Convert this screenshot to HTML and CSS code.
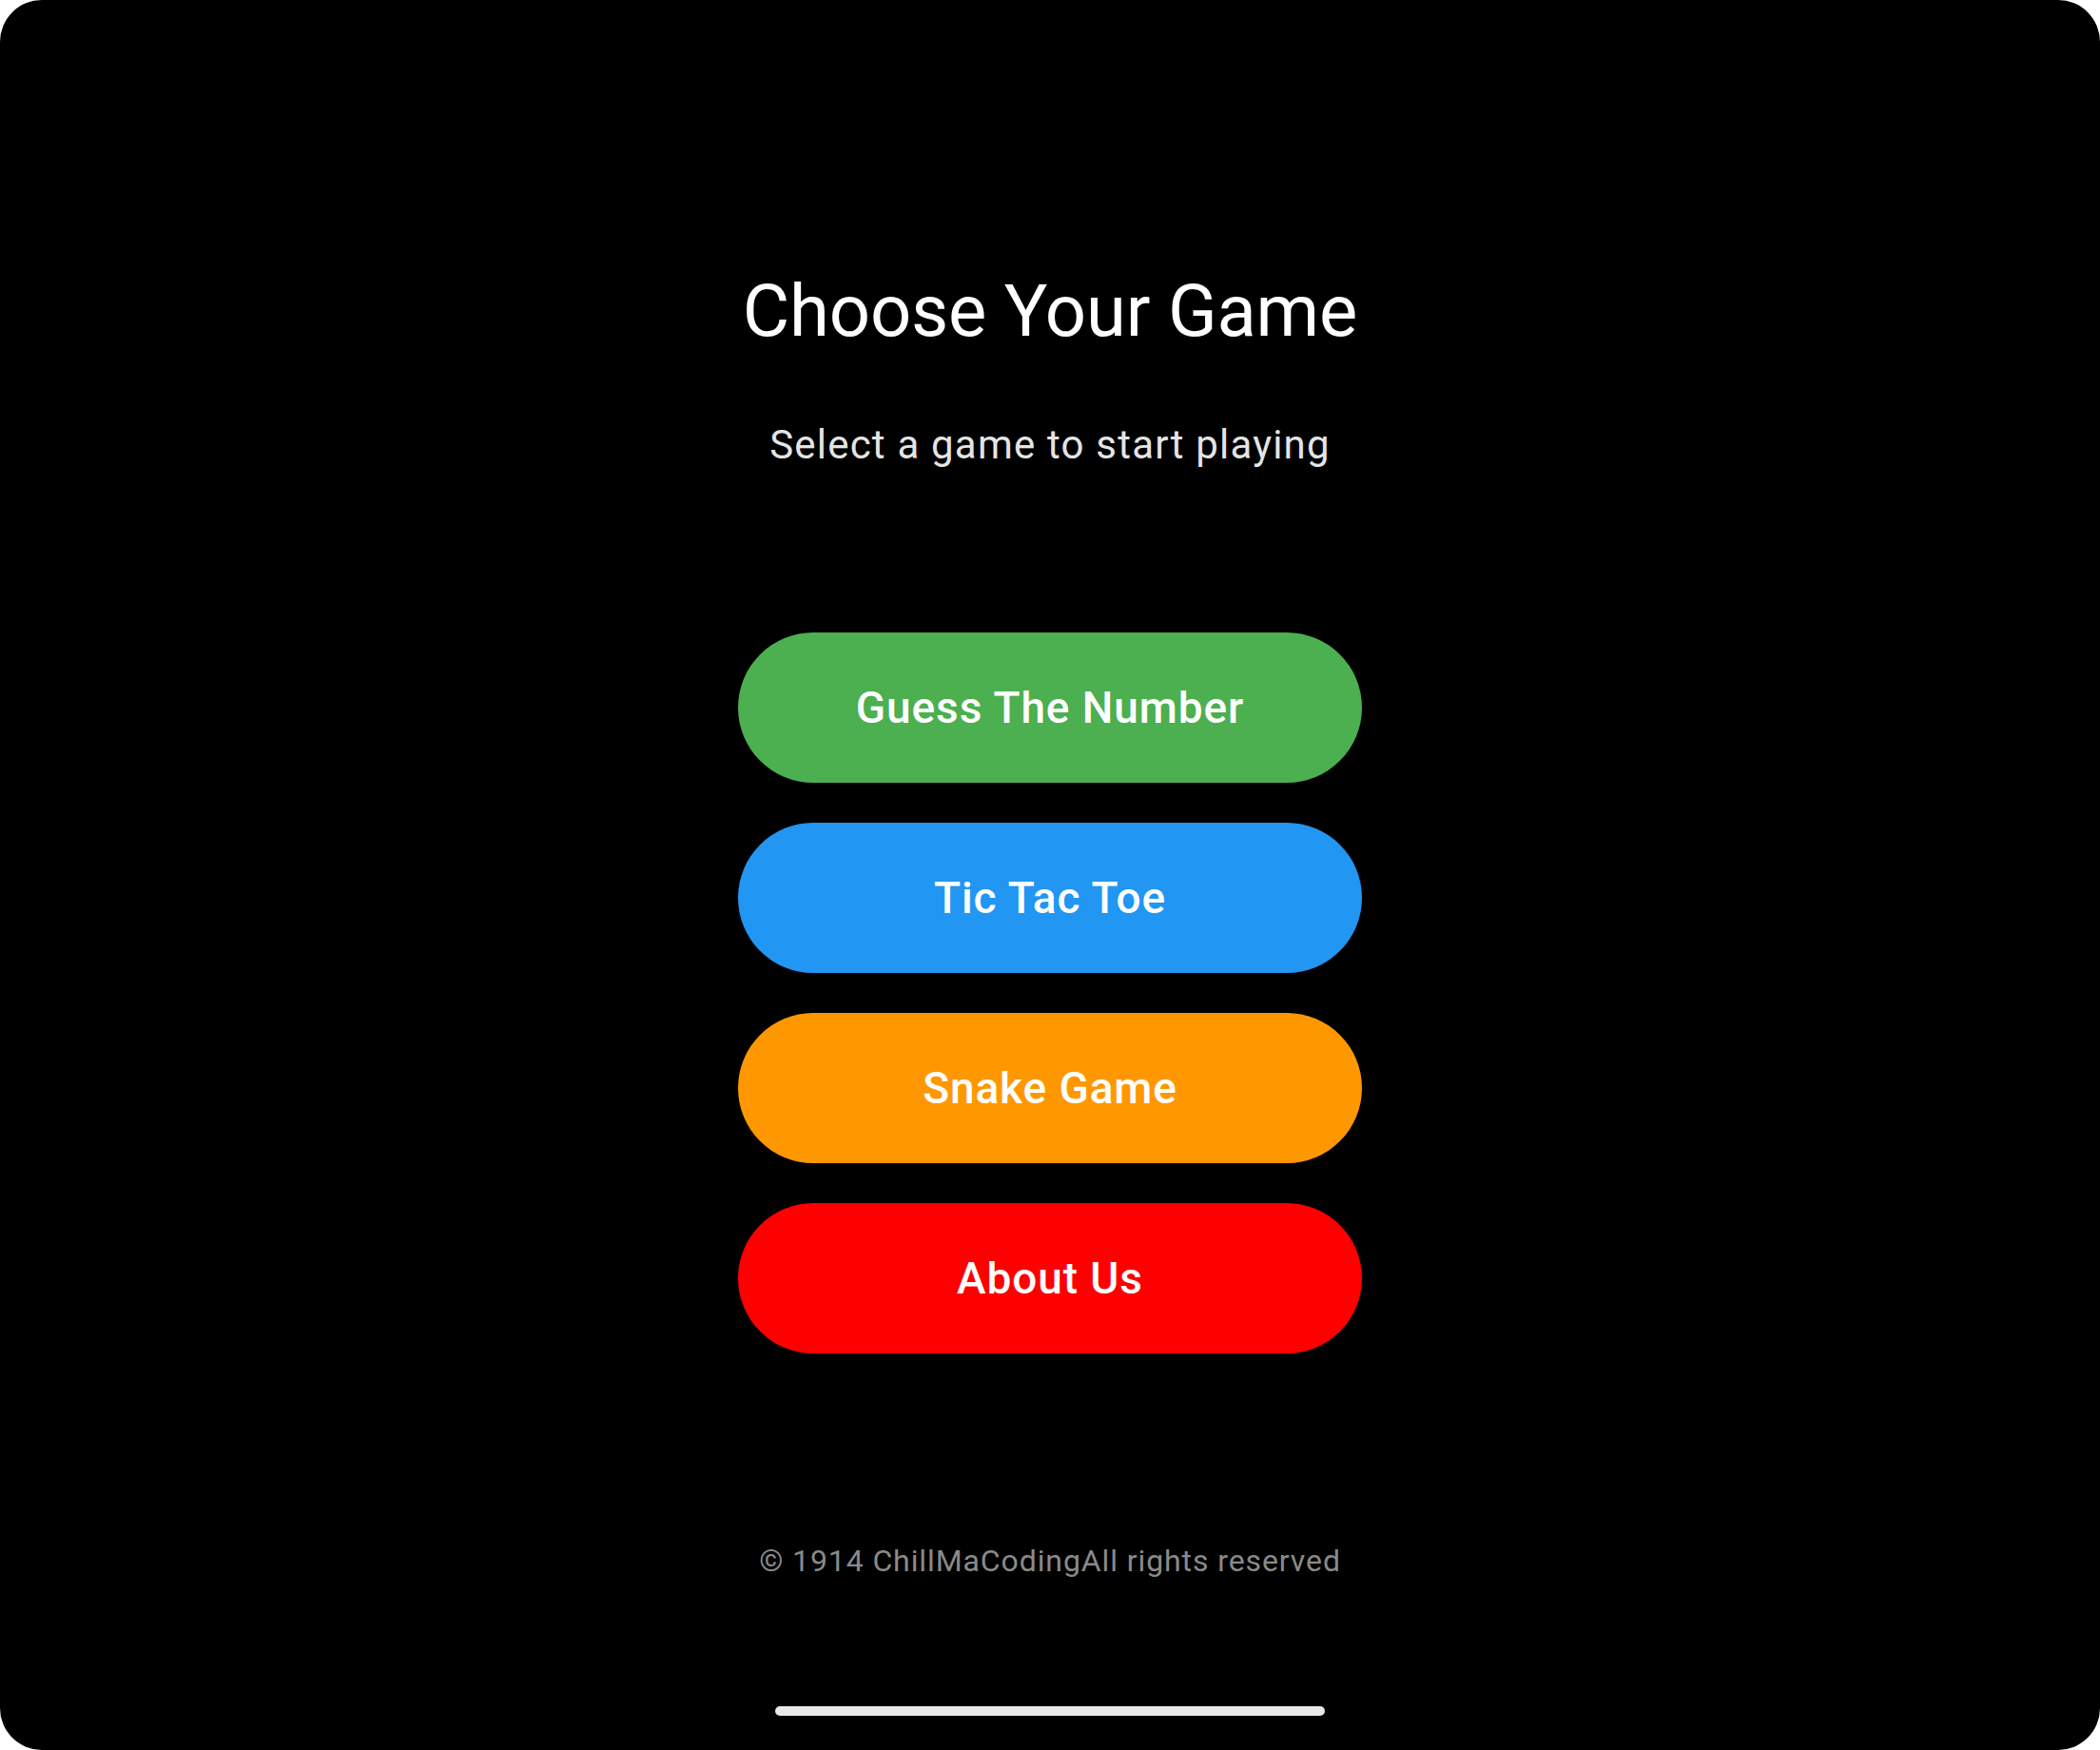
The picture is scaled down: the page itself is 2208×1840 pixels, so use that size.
FILE: index.html
```html
<!DOCTYPE html>
<html lang="en">
<head>
<meta charset="utf-8">
<title>Choose Your Game</title>
<link rel="stylesheet" href="styles.css">
</head>
<body>
<div class="screen">
  <h1 class="title">Choose Your Game</h1>
  <p class="subtitle">Select a game to start playing</p>
  <div class="menu">
    <button class="btn btn-green">Guess The Number</button>
    <button class="btn btn-blue">Tic Tac Toe</button>
    <button class="btn btn-orange">Snake Game</button>
    <button class="btn btn-red">About Us</button>
  </div>
  <p class="footer">© 1914 ChillMaCodingAll rights reserved</p>
  <div class="home-indicator"></div>
</div>
</body>
</html>
```

FILE: styles.css
```css
html, body {
  margin: 0;
  padding: 0;
  background: #ffffff;
}

.screen {
  width: 2208px;
  height: 1840px;
  box-sizing: border-box;
  background: #000000;
  border-radius: 44px;
  overflow: hidden;
  display: flex;
  flex-direction: column;
  align-items: center;
  padding-top: 282px;
  font-family: Roboto, "Noto Sans", sans-serif;
}

.title {
  margin: 0;
  font-size: 76px;
  font-weight: 400;
  line-height: normal;
  color: #ffffff;
  letter-spacing: -0.2px;
}

.subtitle {
  margin: 71px 0 0 0;
  font-size: 42px;
  font-weight: 400;
  line-height: normal;
  color: #e4e4e4;
  letter-spacing: 1.2px;
}

.menu {
  margin-top: 173px;
  display: flex;
  flex-direction: column;
  gap: 42px;
}

.btn {
  width: 656px;
  height: 158px;
  border: none;
  border-radius: 79px;
  display: flex;
  align-items: center;
  justify-content: center;
  font-family: Roboto, "Noto Sans", sans-serif;
  font-size: 46px;
  font-weight: 500;
  letter-spacing: 0.9px;
  color: #ffffff;
  padding: 0;
}

.btn-green { background: #4caf50; }
.btn-blue { background: #2196f3; }
.btn-orange { background: #ff9800; }
.btn-red { background: #ff0000; }

.footer {
  margin: 199px 0 0 0;
  font-size: 32px;
  font-weight: 400;
  line-height: normal;
  color: #8a8a8a;
  letter-spacing: 0.9px;
}

.home-indicator {
  margin-top: 134px;
  width: 578px;
  height: 10px;
  border-radius: 5px;
  background: #e8e8e8;
}
```
